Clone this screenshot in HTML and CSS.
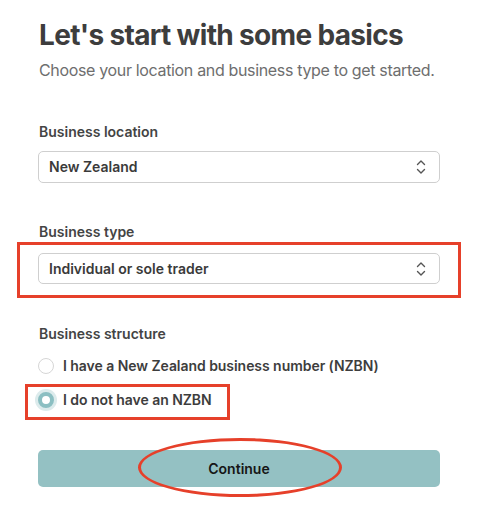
FILE: index.html
```html
<!DOCTYPE html>
<html>
<head>
<meta charset="utf-8">
<link rel="stylesheet" href="styles.css">
</head>
<body>
<main class="page">
  <h1 class="title">Let's start with some basics</h1>
  <p class="subtitle">Choose your location and business type to get started.</p>

  <section class="field">
    <div class="label">Business location</div>
    <div class="select">
      <span class="select-value">New Zealand</span>
      <svg class="chev" width="10" height="16" viewBox="0 0 10 16"><path d="M1.5 5.5 L5 2 L8.5 5.5 M1.5 10.5 L5 14 L8.5 10.5" fill="none" stroke="#555" stroke-width="1.4" stroke-linecap="round" stroke-linejoin="round"/></svg>
    </div>
  </section>

  <section class="field field-type">
    <div class="label">Business type</div>
    <div class="select">
      <span class="select-value">Individual or sole trader</span>
      <svg class="chev" width="10" height="16" viewBox="0 0 10 16"><path d="M1.5 5.5 L5 2 L8.5 5.5 M1.5 10.5 L5 14 L8.5 10.5" fill="none" stroke="#555" stroke-width="1.4" stroke-linecap="round" stroke-linejoin="round"/></svg>
    </div>
    <div class="annot-box annot-type"></div>
  </section>

  <section class="field field-structure">
    <div class="label">Business structure</div>
    <div class="radios">
      <div class="radio-row">
        <span class="radio"></span>
        <span class="radio-text">I have a New Zealand business number (NZBN)</span>
      </div>
      <div class="radio-row">
        <span class="radio checked"></span>
        <span class="radio-text">I do not have an NZBN</span>
        <div class="annot-box annot-radio"></div>
      </div>
    </div>
  </section>

  <div class="actions">
    <button class="btn">Continue</button>
    <div class="annot-ellipse"></div>
  </div>
</main>
</body>
</html>
```

FILE: styles.css
```css
* { box-sizing: border-box; }
html, body { margin: 0; padding: 0; background: #fff; }
body {
  font-family: Inter, "Noto Sans", "Liberation Sans", sans-serif;
  color: #3f3f3f;
}
.page {
  width: 491px;
  min-height: 519px;
  padding: 18px 51px 32px 38px;
}
.title {
  margin: 0 0 0 1px;
  font-size: 28px;
  line-height: 34px;
  font-weight: 700;
  color: #3d3d3d;
  letter-spacing: -0.66px;
  white-space: nowrap;
}
.subtitle {
  margin: 6px 0 0 1px;
  font-size: 16px;
  line-height: 24px;
  color: #6e6e6e;
  letter-spacing: -0.34px;
  white-space: nowrap;
}
.field { position: relative; margin-top: 40px; }
.field-type { margin-top: 39px; }
.field-structure { margin-top: 40px; }
.label {
  margin-left: 1px;
  font-size: 14px;
  line-height: 20px;
  font-weight: 600;
  color: #444;
}
.select {
  margin-top: 9px;
  height: 32px;
  border: 1px solid #cfcfcf;
  border-radius: 5px;
  display: flex;
  align-items: center;
  justify-content: space-between;
  padding: 0 13px 0 10px;
  background: #fff;
}
.field-type .select { margin-top: 11px; height: 31px; }
.select-value {
  font-size: 14px;
  line-height: 20px;
  font-weight: 600;
  color: #3a3a3a;
}
.chev { display: block; }
.radios { margin-top: 5px; }
.radio-row {
  position: relative;
  display: flex;
  align-items: center;
  height: 34px;
  gap: 9px;
}
.radio {
  width: 16px;
  height: 16px;
  border-radius: 50%;
  border: 1px solid #d6d6d6;
  background: #fff;
  flex: none;
}
.radio.checked {
  border: 4px solid #8bbfc2;
  box-shadow: 0 0 0 3px #dcebec;
}
.radio-text {
  font-size: 14px;
  line-height: 20px;
  font-weight: 600;
  color: #3d3d3d;
  letter-spacing: -0.05px;
}
.actions { position: relative; margin-top: 33px; height: 37px; }
.btn {
  display: block;
  width: 100%;
  height: 37px;
  border: none;
  border-radius: 5px;
  background: #94c1c3;
  font-family: inherit;
  font-size: 14px;
  font-weight: 600;
  color: #161616;
  padding: 0;
}
.annot-box {
  position: absolute;
  border: 3px solid #e6402a;
  pointer-events: none;
}
.annot-type { left: -21px; top: 20px; width: 444px; height: 56px; }
.annot-radio { left: -13px; top: 1px; width: 205px; height: 36px; }
.annot-ellipse {
  position: absolute;
  left: 100px;
  top: -12px;
  width: 204px;
  height: 59px;
  border: 3px solid #e6402a;
  border-radius: 50%;
  pointer-events: none;
}
```
